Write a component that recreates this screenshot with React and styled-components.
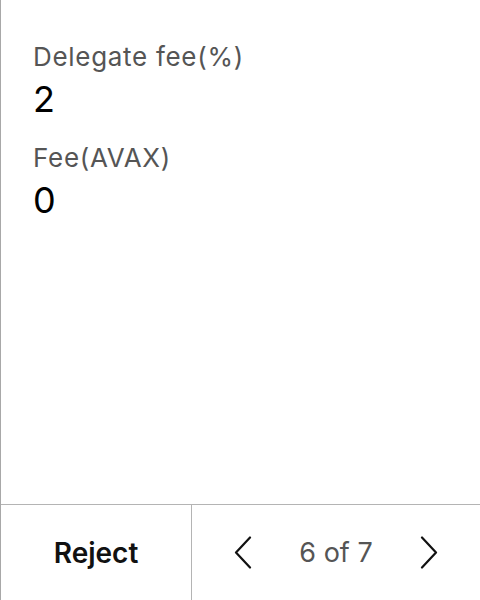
import styled, { createGlobalStyle } from "styled-components"

const Global = createGlobalStyle`
    html, body { margin: 0; padding: 0; background: #fff; }
    body { font-family: Inter, "Noto Sans", sans-serif; }
`

const Screen = styled.main`
    width: 480px;
    height: 600px;
    box-sizing: border-box;
    border-left: 1px solid #a8a8a8;
    display: flex;
    flex-direction: column;
`

const Content = styled.section`
    flex: 1;
    padding: 41px 32px 0;
    display: flex;
    flex-direction: column;
`

const Field = styled.div`
    display: flex;
    flex-direction: column;
    margin-bottom: 21px;
`

const Label = styled.span`
    font-size: 26px;
    line-height: 31px;
    letter-spacing: 0.7px;
    color: #555;
`

const Value = styled.span`
    margin-top: 5px;
    font-size: 36px;
    line-height: 44px;
    color: #000;
`

const Footer = styled.footer`
    height: 96px;
    box-sizing: border-box;
    border-top: 1px solid #b4b4b4;
    display: grid;
    grid-template-columns: 191px 1fr;
`

const RejectButton = styled.button`
    border: none;
    border-right: 1px solid #b4b4b4;
    background: none;
    font-family: inherit;
    font-size: 28px;
    font-weight: 600;
    color: #111;
    padding: 0;
`

const Pager = styled.div`
    display: flex;
    align-items: center;
    justify-content: center;
    gap: 47px;
`

const PageText = styled.span`
    font-size: 27px;
    color: #555;
`

const Arrow = styled.svg`
    width: 18px;
    height: 33px;
    display: block;
`

const Chevron = ({ dir }) => (
    <Arrow viewBox="0 0 18 33">
        <path
            d={dir === "left" ? "M16 1.5 L2 16.5 L16 31.5" : "M2 1.5 L16 16.5 L2 31.5"}
            fill="none"
            stroke="#111"
            strokeWidth="2.2"
            strokeLinecap="round"
            strokeLinejoin="round"
        />
    </Arrow>
)

const App = () => {
    return (
        <>
            <Global />
            <Screen>
                <Content>
                    <Field>
                        <Label>Delegate fee(%)</Label>
                        <Value>2</Value>
                    </Field>
                    <Field>
                        <Label>Fee(AVAX)</Label>
                        <Value>0</Value>
                    </Field>
                </Content>
                <Footer>
                    <RejectButton>Reject</RejectButton>
                    <Pager>
                        <Chevron dir="left" />
                        <PageText>6 of 7</PageText>
                        <Chevron dir="right" />
                    </Pager>
                </Footer>
            </Screen>
        </>
    )
}

export default App
